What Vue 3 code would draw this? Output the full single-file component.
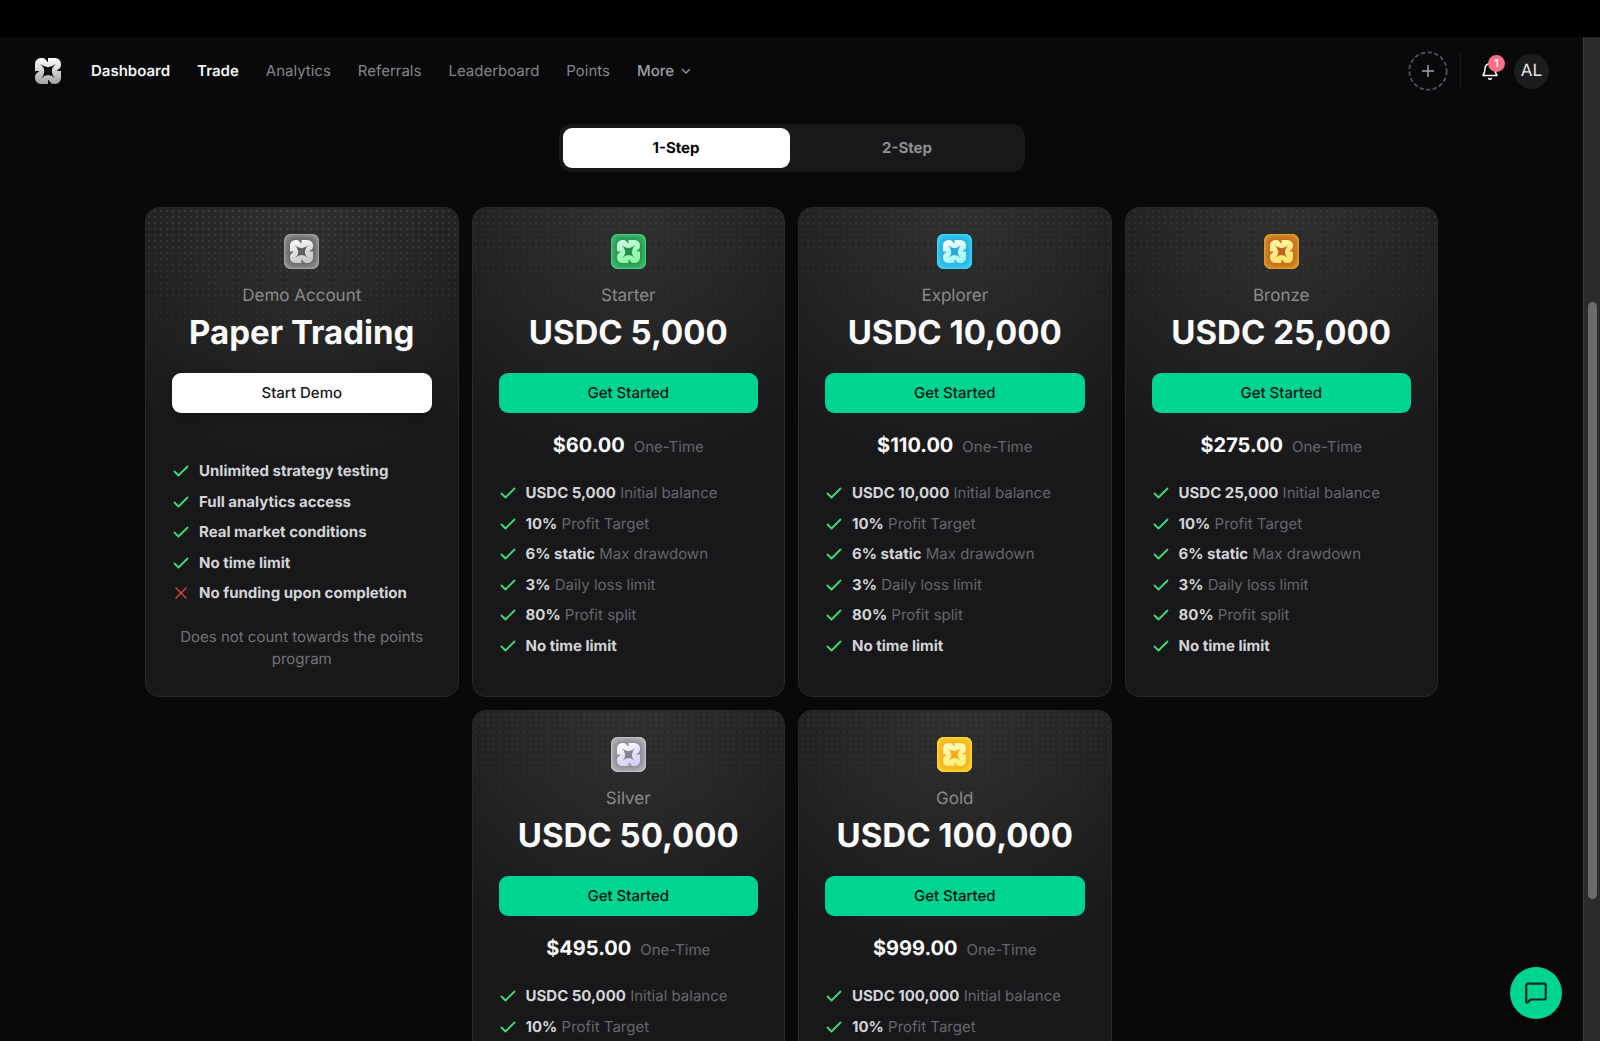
<script setup>
import { ref } from 'vue'

const step = ref('1-Step')
const steps = ['1-Step', '2-Step']

const links = [
  { label: 'Dashboard', active: true },
  { label: 'Trade', active: true },
  { label: 'Analytics' },
  { label: 'Referrals' },
  { label: 'Leaderboard' },
  { label: 'Points' },
]

const mark =
  'M13 0H20A6 6 0 0 1 26 6V7C26 10 24 11 22 12.500V13H26V20A6 6 0 0 1 20 26H19C16 26 15 24 13.500 22H13V26H6A6 6 0 0 1 0 20V19C0 16 2 15 4 13.500V13H0V6A6 6 0 0 1 6 0H7C10 0 11 2 12.500 4H13Z' +
  'M5.400 6Q13 13 6 20.400Q13 13.800 20 20.200Q13.200 13 20.600 6Q13 12.600 5.400 6Z'

const account = (tier, name, size, price) => ({
  tier,
  name,
  title: `USDC ${size}`,
  action: 'Get Started',
  price,
  features: [
    { strong: `USDC ${size}`, rest: 'Initial balance' },
    { strong: '10%', rest: 'Profit Target' },
    { strong: '6% static', rest: 'Max drawdown' },
    { strong: '3%', rest: 'Daily loss limit' },
    { strong: '80%', rest: 'Profit split' },
    { strong: 'No time limit' },
  ],
})

const plans = [
  {
    tier: 'demo',
    name: 'Demo Account',
    title: 'Paper Trading',
    action: 'Start Demo',
    features: [
      { strong: 'Unlimited strategy testing' },
      { strong: 'Full analytics access' },
      { strong: 'Real market conditions' },
      { strong: 'No time limit' },
      { strong: 'No funding upon completion', missing: true },
    ],
    note: 'Does not count towards the points program',
  },
  account('starter', 'Starter', '5,000', '$60.00'),
  account('explorer', 'Explorer', '10,000', '$110.00'),
  account('bronze', 'Bronze', '25,000', '$275.00'),
  account('silver', 'Silver', '50,000', '$495.00'),
  account('gold', 'Gold', '100,000', '$999.00'),
]

const tints = {
  demo: ['#ffffff', '#c8c8c8'],
  starter: ['#d4ffe8', '#8df7a4'],
  explorer: ['#ffffff', '#a5f7f0'],
  bronze: ['#fff7a8', '#ffe36b'],
  silver: ['#ffffff', '#d5d0f5'],
  gold: ['#fffbc8', '#fff27a'],
}
</script>

<template>
  <div class="app">
    <div class="strip"></div>
    <div class="frame">
      <div class="view">
        <header class="header">
          <a href="#" class="logo" aria-label="Home">
            <svg viewBox="0 0 26 26" width="26" height="26">
              <defs>
                <linearGradient id="logo-fill" x1="0" y1="0" x2="0" y2="1">
                  <stop offset="0" stop-color="#ffffff" />
                  <stop offset="1" stop-color="#a3a3a3" />
                </linearGradient>
              </defs>
              <path :d="mark" fill="url(#logo-fill)" fill-rule="evenodd" />
            </svg>
          </a>
          <nav class="nav">
            <a v-for="link in links" :key="link.label" href="#" :class="{ active: link.active }">{{ link.label }}</a>
            <button type="button" class="more">
              More
              <svg viewBox="0 0 10 10" width="10" height="10" fill="none" stroke="currentColor" stroke-width="1.2" stroke-linecap="round" stroke-linejoin="round">
                <path d="M1.500 3.500L5 7L8.500 3.500" />
              </svg>
            </button>
          </nav>
          <div class="tools">
            <button type="button" class="add" aria-label="New account">
              <svg viewBox="0 0 40 40" width="40" height="40" fill="none">
                <circle cx="20" cy="20" r="18.700" stroke="#52525b" stroke-width="1.800" stroke-dasharray="4.300 2.400" />
                <path d="M20 14V26M14 20H26" stroke="#a1a1aa" stroke-width="1.500" />
              </svg>
            </button>
            <span class="divider"></span>
            <button type="button" class="bell" aria-label="Notifications">
              <svg viewBox="0 0 24 24" width="20" height="20" fill="none" stroke="#fafafa" stroke-width="1.800" stroke-linecap="round" stroke-linejoin="round">
                <path d="M10.300 21a2.200 2.200 0 0 0 3.400 0" />
                <path d="M3.500 17.500C5.500 15 6 13 6 9a6 6 0 0 1 12 0c0 4 .5 6 2.500 8.500Z" />
              </svg>
              <span class="badge">1</span>
            </button>
            <button type="button" class="avatar">AL</button>
          </div>
        </header>

        <main class="main">
          <div class="toggle">
            <button v-for="s in steps" :key="s" type="button" :class="{ on: step === s }" @click="step = s">{{ s }}</button>
          </div>

          <div class="plans">
            <section v-for="plan in plans" :key="plan.tier" class="card" :class="plan.tier">
              <div class="emblem">
                <svg viewBox="0 0 26 26" width="23" height="23">
                  <defs>
                    <linearGradient :id="`fill-${plan.tier}`" x1="0" y1="0" x2="0.400" y2="1">
                      <stop offset="0" :stop-color="tints[plan.tier][0]" />
                      <stop offset="1" :stop-color="tints[plan.tier][1]" />
                    </linearGradient>
                  </defs>
                  <path :d="mark" :fill="`url(#fill-${plan.tier})`" fill-rule="evenodd" />
                </svg>
              </div>
              <p class="name">{{ plan.name }}</p>
              <h2 class="title">{{ plan.title }}</h2>
              <button type="button" class="action">{{ plan.action }}</button>
              <p v-if="plan.price" class="price"><strong>{{ plan.price }}</strong><span>One-Time</span></p>
              <ul class="features">
                <li v-for="f in plan.features" :key="f.strong">
                  <svg v-if="f.missing" class="cross" viewBox="0 0 18 18" width="18" height="18">
                    <path d="M4 4L14 14M14 4L4 14" />
                  </svg>
                  <svg v-else class="check" viewBox="0 0 18 18" width="18" height="18">
                    <path d="M2.500 9.500L6.500 13.500L15.500 4.500" />
                  </svg>
                  <span><strong>{{ f.strong }}</strong>{{ f.rest ? ' ' + f.rest : '' }}</span>
                </li>
              </ul>
              <p v-if="plan.note" class="note">{{ plan.note }}</p>
            </section>
          </div>
        </main>
      </div>
      <div class="scrollbar"><div class="thumb"></div></div>
    </div>

    <button type="button" class="chat" aria-label="Open chat">
      <svg viewBox="0 0 24 24" width="26" height="26" fill="none" stroke="#0f2a22" stroke-width="2" stroke-linecap="round" stroke-linejoin="round">
        <path d="M3 20.500V5a1.600 1.600 0 0 1 1.600-1.600H19.400A1.600 1.600 0 0 1 21 5V16.400A1.600 1.600 0 0 1 19.400 18H7L4.500 20.500Q3.500 21.500 3 20.500Z" />
      </svg>
    </button>
  </div>
</template>

<style>
body {
  background: #09090b;
}
</style>

<style scoped>
.app {
  position: relative;
  display: flex;
  flex-direction: column;
  height: 100vh;
  overflow: hidden;
  background: #09090b;
  color: #fafafa;
  font-family: Inter, "Liberation Sans", sans-serif;
  font-size: 15px;
  line-height: 22px;
  text-rendering: geometricPrecision;
}
button {
  border: 0;
  padding: 0;
  background: none;
  color: inherit;
  font: inherit;
  text-rendering: inherit;
  cursor: pointer;
}
a {
  color: inherit;
  text-decoration: none;
}
p,
h2,
ul {
  margin: 0;
  padding: 0;
}
svg {
  display: block;
  flex: none;
}
.strip {
  flex: none;
  height: 37px;
  background: #000;
}
.frame {
  display: flex;
  flex: 1;
  min-height: 0;
}
.view {
  flex: 1;
  min-width: 0;
  overflow: hidden;
}
.scrollbar {
  flex: none;
  display: flex;
  flex-direction: column;
  align-items: center;
  box-sizing: border-box;
  width: 17px;
  border-left: 1px solid #3c3c3c;
  background: #2b2b2b;
}
.scrollbar::before {
  content: "";
  height: 26.4%;
}
.thumb {
  width: 9px;
  height: 59.5%;
  border-radius: 5px;
  background: #6b6b6b;
}

.header {
  display: flex;
  align-items: center;
  height: 68px;
  padding: 0 34px 0 35px;
}
.logo {
  margin-right: 30px;
}
.nav {
  display: flex;
  align-items: center;
  gap: 27px;
  color: #85858d;
}
.nav .active {
  color: #f4f4f5;
  font-weight: 600;
}
.more {
  display: flex;
  align-items: center;
  gap: 7px;
  color: #9d9da5;
  font-weight: 500;
}
.tools {
  display: flex;
  align-items: center;
  margin-left: auto;
}
.divider {
  width: 1px;
  height: 36px;
  margin: 0 19px 0 12px;
  background: #1c1c1f;
}
.bell {
  position: relative;
  margin-right: 14px;
}
.badge {
  position: absolute;
  top: -6px;
  left: 8px;
  width: 17px;
  height: 17px;
  border-radius: 50%;
  background: #fb6f84;
  font-size: 11px;
  font-weight: 600;
  line-height: 17px;
  text-align: center;
}
.avatar {
  width: 35px;
  height: 35px;
  border-radius: 50%;
  background: #1c1c1e;
  color: #e4e4e7;
  font-size: 17px;
}

.main {
  padding: 19px 24px 40px;
}
.toggle {
  display: grid;
  grid-template-columns: 1fr 1fr;
  gap: 4px;
  box-sizing: border-box;
  max-width: 466px;
  height: 48px;
  margin: 0 auto 35px;
  padding: 4px;
  border-radius: 13px;
  background: #18181a;
}
.toggle button {
  border-radius: 9px;
  color: #8e8e98;
  font-weight: 700;
}
.toggle .on {
  background: #fff;
  color: #09090b;
}

.plans {
  display: flex;
  flex-wrap: wrap;
  justify-content: center;
  gap: 13px;
  max-width: 1293px;
  margin: 0 auto;
}
.card {
  position: relative;
  isolation: isolate;
  display: flex;
  flex-direction: column;
  align-items: center;
  box-sizing: border-box;
  width: calc((100% - 39px) / 4);
  padding: 26px;
  border: 1px solid #29292b;
  border-radius: 14px;
  background: radial-gradient(ellipse 85% 55% at 50% 0, #303031 0%, #262627 45%, #18181a 100%) #18181a;
}
.card::before {
  content: "";
  position: absolute;
  z-index: -1;
  inset: 0 0 auto;
  height: 150px;
  border-radius: 13px 13px 0 0;
  background: radial-gradient(circle, rgba(255, 255, 255, 0.06) 1px, transparent 1px) 0 0 / 6px 6px;
  mask-image: linear-gradient(#000, transparent);
}
.demo::before {
  background-image: radial-gradient(circle, rgba(255, 255, 255, 0.1) 1px, transparent 1px);
}
.emblem {
  display: grid;
  place-items: center;
  width: 35px;
  height: 35px;
  border-radius: 7px;
  background: var(--base);
  box-shadow: inset 0 0 8px 2px var(--edge), inset 0 0 1px 1px var(--edge);
}
.demo {
  --base: #5f5f5f;
  --edge: #a3a3a3;
}
.starter {
  --base: #268a4a;
  --edge: #43d07d;
}
.explorer {
  --base: #26a8e6;
  --edge: #3dd9f5;
}
.bronze {
  --base: #c0601c;
  --edge: #e0a128;
}
.silver {
  --base: #85858c;
  --edge: #c4c4cc;
}
.gold {
  --base: #f7a81e;
  --edge: #fbdc2c;
}
.name {
  margin-top: 15px;
  color: #8a8a8a;
  font-size: 17px;
  line-height: 24px;
}
.title {
  margin: 4px 0 21px;
  font-size: 33px;
  font-weight: 700;
  line-height: 40px;
  white-space: nowrap;
}
.action {
  align-self: stretch;
  height: 40px;
  border-radius: 9px;
  background: #00d492;
  color: #09150f;
  font-weight: 500;
}
.demo .action {
  margin-bottom: 24px;
  background: #fff;
  color: #18181b;
  box-shadow: 0 6px 14px rgba(0, 0, 0, 0.25);
}
.price {
  display: flex;
  align-items: baseline;
  gap: 9px;
  margin-top: 18px;
  line-height: 28px;
}
.price strong {
  font-size: 20px;
  font-weight: 700;
}
.price span {
  color: #66666e;
}
.features {
  display: flex;
  flex-direction: column;
  justify-content: space-between;
  align-self: stretch;
  min-height: 175px;
  margin-top: 21px;
  color: #66666e;
  list-style: none;
}
.demo .features {
  min-height: 144px;
  margin-top: 23px;
}
.features li {
  display: flex;
  align-items: center;
  gap: 9px;
}
.features strong {
  color: #d4d4d8;
  font-weight: 700;
}
.check,
.cross {
  fill: none;
  stroke: #3fdc76;
  stroke-width: 1.8;
  stroke-linecap: round;
  stroke-linejoin: round;
}
.cross {
  stroke: #e04545;
  stroke-width: 1.4;
}
.note {
  margin-top: 22px;
  color: #737373;
  text-align: center;
}

.chat {
  position: absolute;
  right: 38px;
  bottom: 22px;
  display: grid;
  place-items: center;
  width: 52px;
  height: 52px;
  border-radius: 50%;
  background: #00d492;
  box-shadow: 0 4px 10px rgba(0, 0, 0, 0.4);
}
</style>
